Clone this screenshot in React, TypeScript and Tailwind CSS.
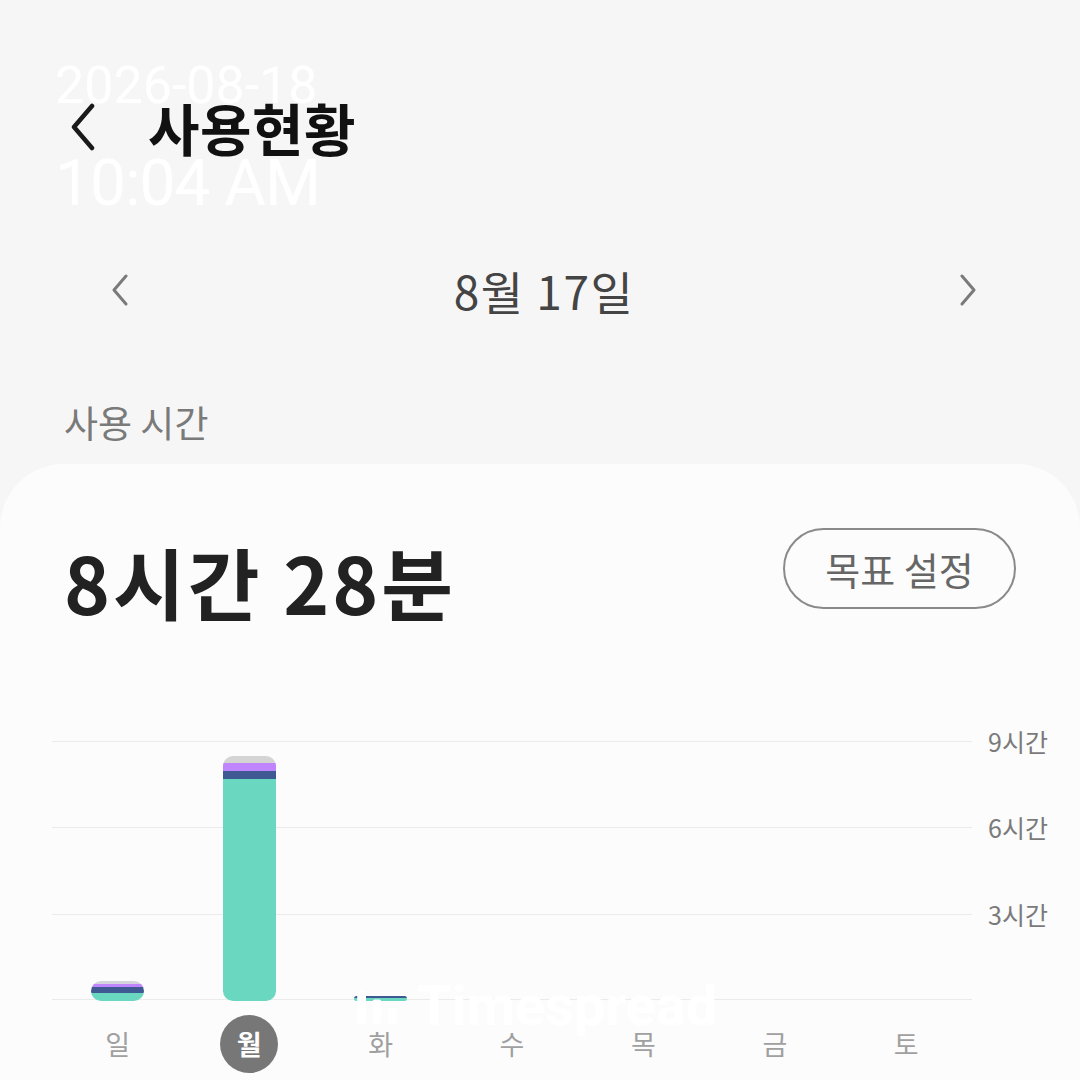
import React from "react";

const KR = "font-['Noto_Sans_CJK_KR','Noto_Sans',sans-serif]";

type Seg = { color: string; h: number };

// stacked usage segments per day, bottom → top (px)
const bars: Seg[][] = [
  [
    { color: "#6ad8c0", h: 8 },
    { color: "#3f5a93", h: 6 },
    { color: "#c084fc", h: 3 },
    { color: "#d4d4dc", h: 3 },
  ],
  [
    { color: "#6ad8c0", h: 222 },
    { color: "#3f5a93", h: 8 },
    { color: "#c084fc", h: 8 },
    { color: "#d4d4d4", h: 7 },
  ],
  [
    { color: "#6ad8c0", h: 3 },
    { color: "#3f5a93", h: 2 },
  ],
  [],
  [],
  [],
  [],
];

const days = ["일", "월", "화", "수", "목", "금", "토"];

const Chevron = ({ dir, className }: { dir: "left" | "right"; className?: string }) => (
  <svg viewBox="0 0 20 32" className={className} fill="none" stroke="currentColor" strokeWidth={3} strokeLinecap="round" strokeLinejoin="round">
    {dir === "left" ? <path d="M16 2 L4 16 L16 30" /> : <path d="M4 2 L16 16 L4 30" />}
  </svg>
);

const Chart = () => (
  <div className="flex mt-[121px]">
    <div className="relative w-[920px] ml-[52px] h-[260px]">
      <div className="flex flex-col">
        <div className="h-[86px] border-t border-[#ebebeb]" />
        <div className="h-[87px] border-t border-[#ebebeb]" />
        <div className="h-[86px] border-t border-[#ebebeb] border-b" />
      </div>
      <div className="absolute inset-0 grid grid-cols-7">
        {bars.map((segs, i) => (
          <div key={i} className="flex flex-col justify-end items-center">
            {segs.length > 0 && (
              <div className="w-[53px] flex flex-col-reverse overflow-hidden rounded-[10px]">
                {segs.map((s, j) => (
                  <div key={j} style={{ height: s.h, backgroundColor: s.color }} />
                ))}
              </div>
            )}
          </div>
        ))}
      </div>
    </div>
    <div className={`flex flex-col ml-[16px] text-[25px] text-[#7a7a7a] leading-none -mt-[12px] ${KR}`}>
      <span className="h-[86px]">9시간</span>
      <span className="h-[87px]">6시간</span>
      <span>3시간</span>
    </div>
  </div>
);

export default function App() {
  return (
    <div className={`relative w-[1080px] h-[1080px] overflow-hidden bg-[#f6f6f6] ${KR}`}>
      {/* header */}
      <div className="flex items-center h-[60px] mt-[97px] pl-[68px]">
        <Chevron dir="left" className="w-[30px] h-[48px] text-[#1a1a1a]" />
        <h1 className="ml-[50px] text-[56px] font-bold leading-none text-[#111] tracking-[0.5px]">사용현황</h1>
      </div>

      {/* date navigation */}
      <div className="flex items-center justify-between h-[60px] mt-[103px] pl-[110px] pr-[102px]">
        <Chevron dir="left" className="w-[20px] h-[32px] text-[#7a7a7a]" />
        <span className="text-[46px] leading-none text-[#444] tracking-[1.5px]">8월 17일</span>
        <Chevron dir="right" className="w-[20px] h-[32px] text-[#7a7a7a]" />
      </div>

      <div className="mt-[84px] pl-[64px] text-[37px] leading-none text-[#7a7a7a]">사용 시간</div>

      {/* card */}
      <div className="mt-[23px] bg-[#fcfcfc] rounded-t-[64px] h-[700px]">
        <div className="flex items-start justify-between pt-[64px] pl-[64px] pr-[64px]">
          <div className="mt-[14px] text-[78px] font-bold leading-none text-[#222] tracking-[3px]">8시간 28분</div>
          <button className="w-[233px] h-[81px] rounded-full border-2 border-[#8a8a8a] text-[38px] text-[#666] leading-none">
            목표 설정
          </button>
        </div>

        <Chart />

        <div className="grid grid-cols-7 w-[920px] ml-[52px] mt-[14px]">
          {days.map((d, i) => (
            <div key={d} className="flex justify-center">
              {i === 1 ? (
                <span className="w-[58px] h-[58px] rounded-full bg-[#777] text-white font-bold text-[27px] flex items-center justify-center">
                  {d}
                </span>
              ) : (
                <span className="h-[58px] flex items-center text-[27px] text-[#a0a0a0]">{d}</span>
              )}
            </div>
          ))}
        </div>
      </div>

      {/* timestamp overlay */}
      <div className="absolute left-[55px] top-[60px] font-['Roboto',sans-serif] text-white leading-none pointer-events-none">
        <div className="text-[52px]">2026-08-18</div>
        <div className="text-[64px] mt-[40px] tracking-[-1px]">10:04 AM</div>
      </div>

      {/* watermark */}
      <div className="absolute left-[355px] top-[978px] flex items-center gap-[18px] text-white pointer-events-none">
        <svg viewBox="0 0 40 40" className="w-[44px] h-[44px]" fill="white">
          <rect x="2" y="6" width="8" height="30" rx="2" />
          <rect x="16" y="14" width="8" height="22" rx="2" />
          <rect x="30" y="22" width="8" height="14" rx="2" />
        </svg>
        <span className="font-['Roboto',sans-serif] font-bold text-[56px] leading-none">Timespread</span>
      </div>
    </div>
  );
}
